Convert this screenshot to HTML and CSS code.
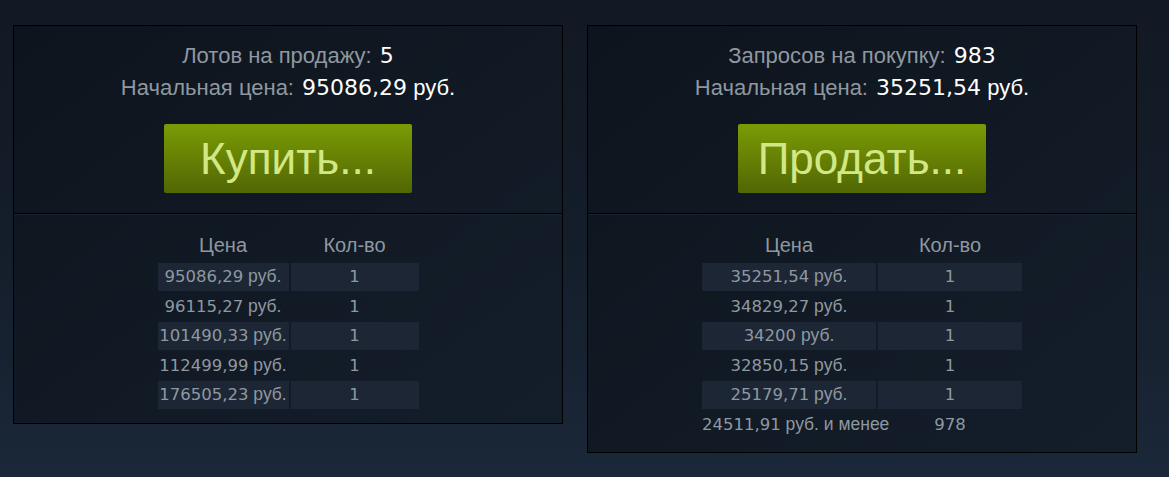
FILE: index.html
```html
<!DOCTYPE html>
<html lang="ru">
<head>
<meta charset="utf-8">
<title>Торговая площадка</title>
<link rel="stylesheet" href="styles.css">
</head>
<body>
<div class="market">
  <div class="orders">
    <div class="orders_top">
      <div class="orders_line"><span class="lbl">Лотов на продажу:</span> <span class="val"><span class="num">5</span></span></div>
      <div class="orders_line"><span class="lbl">Начальная цена:</span> <span class="val"><span class="num">95086,29</span> руб.</span></div>
      <a class="btn_green">Купить...</a>
    </div>
    <div class="orders_bottom">
      <table class="orders_table sell_table">
        <colgroup><col class="col_sell_price"><col class="col_sell_qty"></colgroup>
        <tr><th>Цена</th><th>Кол-во</th></tr>
        <tr class="odd"><td><span class="num">95086,29</span> руб.</td><td class="num">1</td></tr>
        <tr><td><span class="num">96115,27</span> руб.</td><td class="num">1</td></tr>
        <tr class="odd"><td><span class="num">101490,33</span> руб.</td><td class="num">1</td></tr>
        <tr><td><span class="num">112499,99</span> руб.</td><td class="num">1</td></tr>
        <tr class="odd"><td><span class="num">176505,23</span> руб.</td><td class="num">1</td></tr>
      </table>
    </div>
  </div>

  <div class="orders">
    <div class="orders_top">
      <div class="orders_line"><span class="lbl">Запросов на покупку:</span> <span class="val"><span class="num">983</span></span></div>
      <div class="orders_line"><span class="lbl">Начальная цена:</span> <span class="val"><span class="num">35251,54</span> руб.</span></div>
      <a class="btn_green">Продать...</a>
    </div>
    <div class="orders_bottom">
      <table class="orders_table buy_table">
        <colgroup><col class="col_buy_price"><col class="col_buy_qty"></colgroup>
        <tr><th>Цена</th><th>Кол-во</th></tr>
        <tr class="odd"><td><span class="num">35251,54</span> руб.</td><td class="num">1</td></tr>
        <tr><td><span class="num">34829,27</span> руб.</td><td class="num">1</td></tr>
        <tr class="odd"><td><span class="num">34200</span> руб.</td><td class="num">1</td></tr>
        <tr><td><span class="num">32850,15</span> руб.</td><td class="num">1</td></tr>
        <tr class="odd"><td><span class="num">25179,71</span> руб.</td><td class="num">1</td></tr>
        <tr><td><span class="num">24511,91</span> руб. и менее</td><td class="num">978</td></tr>
      </table>
    </div>
  </div>
</div>
</body>
</html>
```

FILE: styles.css
```css
*{
	margin:0;
	padding:0;
	}
html,body{
	height:100%;
	}
body{
	background:linear-gradient(to bottom,#121924 0%,#141d2a 50%,#1b2839 100%);
	font-family:"Liberation Sans",Arial,sans-serif;
	color:#8f98a0;
	}
.num{
	font-family:"DejaVu Sans",Verdana,sans-serif;
	}
.market{
	display:flex;
	align-items:flex-start;
	gap:24px;
	padding:25px 0 0 13px;
	}
.orders{
	width:548px;
	border:1px solid #000;
	background:linear-gradient(to bottom right,#0e141d 0%,#111a25 60%,#141e2b 100%);
	}
.orders_top{
	display:flex;
	flex-direction:column;
	align-items:center;
	padding:14px 0 20px;
	border-bottom:1px solid #000;
	box-shadow:0 1px 0 #19222e;
	}
.orders_line{
	font-size:22px;
	line-height:32px;
	white-space:nowrap;
	}
.orders_line .val{
	color:#fff;
	margin-left:2px;
	}
.btn_green{
	display:block;
	margin-top:20px;
	width:248px;
	height:69px;
	line-height:69px;
	text-align:center;
	border-radius:2px;
	background:linear-gradient(to bottom,#799905 5%,#536904 95%);
	color:#d2e885;
	font-size:44px;
	cursor:pointer;
	}
.orders_bottom{
	padding:19px 0 12px;
	}
.orders_table{
	margin:0 auto;
	border-spacing:2px;
	table-layout:fixed;
	font-size:17.5px;
	}
.orders_table .num{
	font-size:16.5px;
	}
.sell_table{ width:265px;}
.buy_table{ width:324px;}
.orders_table th{
	font-weight:normal;
	font-size:20px;
	color:#8f98a0;
	height:26px;
	line-height:21px;
	vertical-align:top;
	}
.orders_table td{
	height:27.5px;
	padding:0;
	text-align:center;
	white-space:nowrap;
	color:#8f98a0;
	}
.orders_table tr.odd td{
	background:#1c2634;
	}
.col_sell_price{ width:131px;}
.col_sell_qty{ width:128px;}
.col_buy_price{ width:174px;}
.col_buy_qty{ width:144px;}
```
